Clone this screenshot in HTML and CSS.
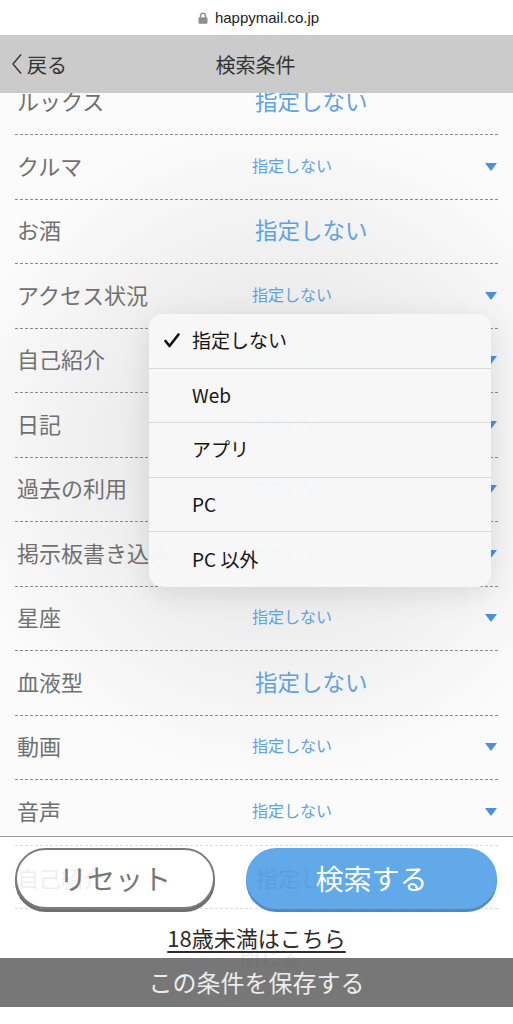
FILE: index.html
```html
<!DOCTYPE html>
<html lang="ja">
<head>
    <meta charset="UTF-8">
    <meta name="viewport" content="width=device-width, initial-scale=1.0">
    <title>検索条件</title>
    <link rel="stylesheet" href="styles.css">
</head>
<body>
    <div class="urlbar">
        <svg class="lock" width="10" height="12" viewBox="0 0 10 12">
            <path d="M2.5 5.5V3.8a2.5 2.5 0 0 1 5 0v1.7" fill="none" stroke="#8e8e8e" stroke-width="1.4"/>
            <rect x="0.5" y="5.2" width="9" height="6.5" rx="1.2" fill="#8e8e8e"/>
        </svg>
        <span>happymail.co.jp</span>
    </div>

    <div class="header">
        <a class="back" href="#">
            <svg width="12" height="22" viewBox="0 0 12 22">
                <polyline points="10,1.5 2,11 10,20.5" fill="none" stroke="#333" stroke-width="1.4"/>
            </svg>
            戻る
        </a>
        <div class="title">検索条件</div>
        <div></div>
    </div>

    <div class="content">
        <div class="list">
            <div class="row"><span class="label">ルックス</span><span class="value big">指定しない</span></div>
            <div class="row"><span class="label">クルマ</span><span class="value">指定しない</span><span class="arrow"></span></div>
            <div class="row"><span class="label">お酒</span><span class="value big">指定しない</span></div>
            <div class="row"><span class="label">アクセス状況</span><span class="value">指定しない</span><span class="arrow"></span></div>
            <div class="row"><span class="label">自己紹介</span><span class="value">指定しない</span><span class="arrow"></span></div>
            <div class="row"><span class="label">日記</span><span class="value">指定しない</span><span class="arrow"></span></div>
            <div class="row"><span class="label">過去の利用</span><span class="value">指定しない</span><span class="arrow"></span></div>
            <div class="row"><span class="label">掲示板書き込み</span><span class="value">指定しない</span><span class="arrow"></span></div>
            <div class="row"><span class="label">星座</span><span class="value">指定しない</span><span class="arrow"></span></div>
            <div class="row"><span class="label">血液型</span><span class="value big">指定しない</span></div>
            <div class="row"><span class="label">動画</span><span class="value">指定しない</span><span class="arrow"></span></div>
            <div class="row"><span class="label">音声</span><span class="value">指定しない</span><span class="arrow"></span></div>
        </div>

        <!-- select popover for アクセス状況 -->
        <ul class="picker">
            <li class="checked">
                <svg class="check" width="16" height="15" viewBox="0 0 16 15">
                    <polyline points="1.5,8 5.5,13 14.5,1.5" fill="none" stroke="#111" stroke-width="2.6" stroke-linecap="round" stroke-linejoin="round"/>
                </svg>
                指定しない
            </li>
            <li>Web</li>
            <li>アプリ</li>
            <li>PC</li>
            <li>PC 以外</li>
        </ul>
    </div>

    <div class="footer">
        <div class="ghost ghost-line top"></div>
        <div class="ghost ghost-line bottom"></div>
        <div class="buttons">
            <button class="btn reset">リセット</button>
            <button class="btn search">検索する</button>
        </div>
        <span class="ghost ghost-label">自己紹介</span>
        <span class="ghost ghost-value">指定しない</span>
        <a class="under18" href="#">18歳未満はこちら</a>
        <span class="ghost ghost-close">閉じる</span>
        <div class="save">この条件を保存する</div>
    </div>
</body>
</html>
```

FILE: styles.css
```css
body {
    margin: 0;
    width: 513px;
    height: 1024px;
    overflow: hidden;
    background-color: white;
    font-family: "Noto Sans CJK JP", "Noto Sans", sans-serif;
    color: #333;
}
.urlbar {
    height: 35px;
    display: flex;
    align-items: center;
    justify-content: center;
    gap: 7px;
    font-family: "Liberation Sans", "Noto Sans CJK JP", sans-serif;
    font-size: 15px;
    color: #222;
    padding-left: 4px;
}
.header {
    position: relative;
    z-index: 3;
    height: 58px;
    background-color: #cbcbcb;
    display: grid;
    grid-template-columns: 1fr auto 1fr;
    align-items: center;
    font-size: 20px;
    color: #333;
}
.back {
    display: flex;
    align-items: center;
    gap: 4px;
    padding-left: 11px;
    color: #333;
    text-decoration: none;
}
.title {
    padding-right: 2px;
}
.content {
    position: relative;
    height: 743px;
    overflow: hidden;
    background: radial-gradient(ellipse 65% 45% at 55% 48%, #e3e3e3 0%, #ececec 45%, #fbfbfb 100%);
}
.list {
    margin-top: -22.5px;
}
.row {
    box-sizing: border-box;
    height: 64.5px;
    margin: 0 15px;
    padding: 0 0 4px 2px;
    border-bottom: 1px dashed #8a8a8a;
    display: grid;
    grid-template-columns: 235px 1fr auto;
    align-items: center;
}
.label {
    font-size: 22px;
    color: #707070;
    white-space: nowrap;
    overflow: hidden;
}
.value {
    font-size: 16px;
    color: #5ea2e3;
}
.value.big {
    font-size: 22.5px;
    padding-left: 3px;
}
.arrow {
    width: 0;
    height: 0;
    margin: 4px 1px 0 0;
    border-left: 6px solid transparent;
    border-right: 6px solid transparent;
    border-top: 8px solid #4a90da;
}
.picker {
    position: absolute;
    left: 149px;
    top: 221px;
    width: 342px;
    margin: 0;
    padding: 0;
    list-style: none;
    background-color: rgba(247, 247, 247, 0.98);
    border-radius: 14px;
    box-shadow: 0 6px 28px rgba(0, 0, 0, 0.10);
    overflow: hidden;
}
.picker li {
    position: relative;
    height: 54.5px;
    box-sizing: border-box;
    padding: 0 0 2px 43px;
    display: flex;
    align-items: center;
    font-size: 19px;
    color: #161616;
    border-bottom: 1px solid #d9d9d9;
}
.picker li:last-child {
    border-bottom: none;
}
.check {
    position: absolute;
    left: 15px;
    top: 19px;
}
.footer {
    position: relative;
    height: 187px;
    border-top: 1px solid #9a9a9a;
    background-color: white;
    display: flex;
    flex-direction: column;
    align-items: center;
}
.buttons {
    align-self: stretch;
    display: grid;
    grid-template-columns: 200px 251px;
    gap: 31px;
    padding: 11px 0 0 15px;
}
.btn {
    height: 61px;
    border-radius: 31px;
    font-family: "Noto Sans CJK JP", sans-serif;
    font-size: 28px;
    padding-bottom: 3px;
    cursor: pointer;
}
.reset {
    background-color: white;
    color: #777;
    border: 2px solid #7a7a7a;
    box-shadow: 0 3px 0 #6f6f6f;
}
.search {
    background-color: #62a9e9;
    color: white;
    border: none;
    box-shadow: 0 3px 0 #4b8bcc;
}
.under18 {
    margin-top: 13px;
    font-size: 22px;
    line-height: 30px;
    color: #2c2c2c;
    text-decoration: underline;
    text-underline-offset: 4px;
    text-decoration-thickness: 1.5px;
}
.save {
    align-self: stretch;
    margin-top: 6px;
    height: 49px;
    padding-bottom: 2px;
    box-sizing: border-box;
    background-color: #777;
    color: #ececec;
    font-size: 24px;
    display: flex;
    align-items: center;
    justify-content: center;
}
.ghost {
    position: absolute;
    opacity: 0.12;
    pointer-events: none;
}
.ghost-line {
    left: 15px;
    right: 15px;
    border-top: 1px dashed #999;
    opacity: 0.35;
}
.ghost-line.top { top: 8px; }
.ghost-line.bottom { top: 71px; }
.ghost-label {
    left: 17px;
    top: 24px;
    font-size: 22px;
    color: #777;
}
.ghost-value {
    left: 256px;
    top: 24px;
    font-size: 22px;
    color: #2060a0;
}
.ghost-close {
    left: 240px;
    top: 106px;
    font-size: 20px;
    color: #555;
}
```
